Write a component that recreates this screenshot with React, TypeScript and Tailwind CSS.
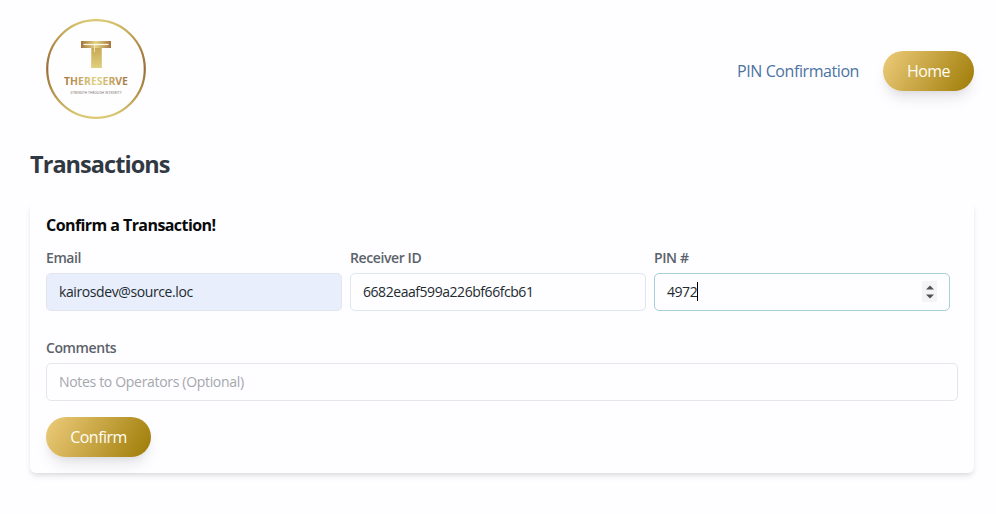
import React from "react";

function Logo() {
  return (
    <svg width="102" height="102" viewBox="0 0 102 102" className="block">
      <defs>
        <linearGradient id="ring" x1="0" y1="0" x2="0" y2="1">
          <stop offset="0" stopColor="#d9c872" />
          <stop offset="0.25" stopColor="#b18b48" />
          <stop offset="0.5" stopColor="#9a6d3c" />
          <stop offset="0.75" stopColor="#b3944c" />
          <stop offset="1" stopColor="#dccb76" />
        </linearGradient>
        <linearGradient id="gold" x1="0" y1="0" x2="1" y2="0">
          <stop offset="0" stopColor="#a5743f" />
          <stop offset="0.5" stopColor="#e2d588" />
          <stop offset="1" stopColor="#a5743f" />
        </linearGradient>
        <linearGradient id="stem" x1="0" y1="0" x2="0" y2="1">
          <stop offset="0" stopColor="#c9a855" />
          <stop offset="1" stopColor="#dfd07c" />
        </linearGradient>
      </defs>
      <circle cx="51" cy="51" r="48.8" fill="#fffeff" stroke="url(#ring)" strokeWidth="2.2" />
      <path d="M36 23H66V30H56.5V50H46.5V30H36Z" fill="url(#gold)" />
      <path d="M46.5 30H56.5V50H46.5Z" fill="url(#stem)" />
      <path d="M38.5 26.5H63.5" fill="none" stroke="#fff8e4" strokeWidth="1.2" />
      <path d="M49.5 27V34" fill="none" stroke="#f8efcf" strokeWidth="0.8" />
      <text x="51" y="66.5" textAnchor="middle" textLength="64" lengthAdjust="spacingAndGlyphs" fontFamily="Open Sans, sans-serif" fontWeight="700" fontSize="10" fill="url(#gold)">THERESERVE</text>
      <text x="51" y="75.5" textAnchor="middle" textLength="51" lengthAdjust="spacing" fontFamily="Lato, sans-serif" fontSize="3" fill="#777069">STRENGTH THROUGH INTEGRITY</text>
    </svg>
  );
}

const gold =
  "h-10 rounded-full bg-[linear-gradient(120deg,#edcc7c,#9e7b05)] text-center text-[16px] text-[#fffdf5] tracking-[-0.55px] shadow-[0_10px_15px_-3px_rgba(0,0,0,0.1),0_4px_6px_-2px_rgba(0,0,0,0.05)]";
const input =
  "flex h-[38px] w-full items-center rounded-[5px] border px-3 pb-px text-[14px] text-[#222a30]";

function Field({ label, children }: { label: string; children: React.ReactNode }) {
  return (
    <div>
      <div className="mb-[5px] h-5 text-[14px] font-semibold leading-5 tracking-[-0.4px] text-[#5b626a]">{label}</div>
      {children}
    </div>
  );
}

export default function App() {
  return (
    <div className="h-[514px] overflow-hidden bg-[#fefdff] pl-[30px] pr-[22px] pt-[18px] font-['Open_Sans','Noto_Sans',sans-serif]">
      <header className="flex h-[106px] items-start justify-between pl-[15px]">
        <Logo />
        <nav className="flex items-center gap-6 pt-[33px]">
          <a className="text-[16px] tracking-[-0.42px] text-[#4b749f]">PIN Confirmation</a>
          <button className={`${gold} w-[91px]`}>Home</button>
        </nav>
      </header>
      <h1 className="mt-[22px] h-9 text-[23.5px] font-bold leading-9 tracking-[-0.95px] text-[#303842]">Transactions</h1>
      <main className="mt-[20px] h-[271px] rounded-md px-4 pt-[11px] shadow-[0_4px_6px_-1px_rgba(0,0,0,0.1),0_2px_4px_-1px_rgba(0,0,0,0.06)]">
        <h2 className="h-6 text-[16px] font-bold leading-6 tracking-[-0.57px] text-[#080a0c]">Confirm a Transaction!</h2>
        <div className="mt-[11px] grid grid-cols-[296px_296px_296px] gap-2">
          <Field label="Email">
            <div className={`${input} border-[#e0e5ee] bg-[#e8eefb]`}>
              <span className="tracking-[-0.4px]">kairosdev@source.loc</span>
            </div>
          </Field>
          <Field label="Receiver ID">
            <div className={`${input} border-[#dfe6ec]`}>
              <span className="tracking-[-0.45px]">6682eaaf599a226bf66fcb61</span>
            </div>
          </Field>
          <Field label="PIN #">
            <div className={`${input} border-[#a7cfda]`}>
              <span className="tracking-[-0.45px]">4972</span>
              <span className="h-[19px] w-px bg-black" />
              <span className="ml-auto flex h-[21px] w-[15px] items-center justify-center bg-[#f4f3f5]">
                <svg width="8" height="14" viewBox="0 0 8 14" fill="#505055">
                  <path d="M0 4.5L4 .5L8 4.5ZM0 9.5H8L4 13.5Z" />
                </svg>
              </span>
            </div>
          </Field>
        </div>
        <div className="mt-[27px]">
          <Field label="Comments">
            <div className={`${input} border-[#e4e6ea]`}>
              <span className="tracking-[-0.32px] text-[#a5a7ad]">Notes to Operators (Optional)</span>
            </div>
          </Field>
        </div>
        <button className={`${gold} mt-4 w-[105px]`}>Confirm</button>
      </main>
    </div>
  );
}
